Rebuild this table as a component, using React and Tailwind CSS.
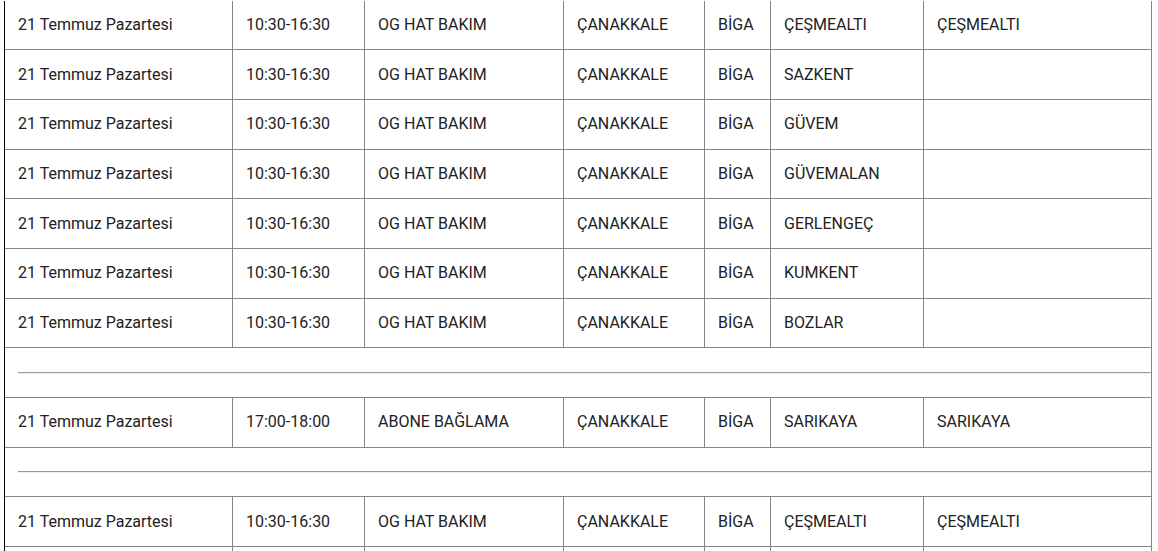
import React from "react";

const rows = [
  ["21 Temmuz Pazartesi", "10:30-16:30", "OG HAT BAKIM", "ÇANAKKALE", "BİGA", "ÇEŞMEALTI", "ÇEŞMEALTI"],
  ["21 Temmuz Pazartesi", "10:30-16:30", "OG HAT BAKIM", "ÇANAKKALE", "BİGA", "SAZKENT", ""],
  ["21 Temmuz Pazartesi", "10:30-16:30", "OG HAT BAKIM", "ÇANAKKALE", "BİGA", "GÜVEM", ""],
  ["21 Temmuz Pazartesi", "10:30-16:30", "OG HAT BAKIM", "ÇANAKKALE", "BİGA", "GÜVEMALAN", ""],
  ["21 Temmuz Pazartesi", "10:30-16:30", "OG HAT BAKIM", "ÇANAKKALE", "BİGA", "GERLENGEÇ", ""],
  ["21 Temmuz Pazartesi", "10:30-16:30", "OG HAT BAKIM", "ÇANAKKALE", "BİGA", "KUMKENT", ""],
  ["21 Temmuz Pazartesi", "10:30-16:30", "OG HAT BAKIM", "ÇANAKKALE", "BİGA", "BOZLAR", ""],
  null,
  ["21 Temmuz Pazartesi", "17:00-18:00", "ABONE BAĞLAMA", "ÇANAKKALE", "BİGA", "SARIKAYA", "SARIKAYA"],
  null,
  ["21 Temmuz Pazartesi", "10:30-16:30", "OG HAT BAKIM", "ÇANAKKALE", "BİGA", "ÇEŞMEALTI", "ÇEŞMEALTI"],
  ["", "", "", "", "", "", ""],
];

export default function App() {
  return (
    <div
      className="w-[1158px] h-[551px] overflow-hidden bg-white text-[16px] text-[#222]"
      style={{ fontFamily: "Roboto, 'Liberation Sans', sans-serif" }}
    >
      <div className="ml-[4px] w-[1148px] border-l border-black mt-[0.5px]">
        {rows.map((r, i) =>
          r ? (
            <div
              key={i}
              className="grid grid-cols-[228px_132px_199px_141px_66px_153px_228px] h-[49.7px]"
            >
              {r.map((c, j) => (
                <div
                  key={j}
                  className="border-r border-b border-[#858585] pl-[13px] flex items-center whitespace-nowrap leading-none"
                >
                  {c}
                </div>
              ))}
            </div>
          ) : (
            <div
              key={i}
              className="h-[49.7px] border-r border-b border-[#858585] pl-[13px] flex items-center"
            >
              <div className="w-full h-[2px] border-t border-t-[#9a9a9a] border-b border-b-[#eeeeee]" />
            </div>
          )
        )}
      </div>
    </div>
  );
}
